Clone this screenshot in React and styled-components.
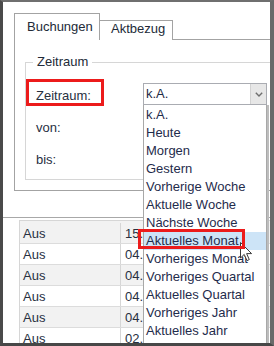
import React from "react";
import styled, { createGlobalStyle } from "styled-components";

const GlobalStyle = createGlobalStyle`
  html, body {
    margin: 0;
    padding: 0;
    background: #fff;
  }
  body {
    font-family: "Liberation Sans", Arial, sans-serif;
    font-size: 13px;
    color: #1e2a44;
  }
`;

const Frame = styled.div`
  position: relative;
  width: 274px;
  height: 346px;
  box-sizing: border-box;
  border-style: solid;
  border-width: 2px 4px 3px 3px;
  border-color: #6f6f6f #6a6a6a #474747 #4a4a4a;
  background: #fff;
  overflow: hidden;
`;

const TabArea = styled.div`
  padding: 11px 0 0 11px;
`;

const TabStrip = styled.div`
  display: flex;
  align-items: flex-end;
  height: 27px;
`;

const Tab = styled.div`
  position: relative;
  z-index: 1;
  box-sizing: border-box;
  width: ${(p) => (p.$active ? "86px" : "73px")};
  height: ${(p) => (p.$active ? "27px" : "20px")};
  padding-left: ${(p) => (p.$active ? "12px" : "11px")};
  padding-top: ${(p) => (p.$active ? "5px" : "0")};
  line-height: 15px;
  background: #fff;
  color: #222a38;
  border: 1px solid #a3a3a3;
  border-left-width: ${(p) => (p.$active ? "1px" : "0")};
  border-bottom-width: 0;
`;

const TabPanel = styled.div`
  box-sizing: border-box;
  margin-top: -1px;
  width: 300px;
  height: 152px;
  border: 1px solid #a3a3a3;
  padding: 14px 0 0 10px;
`;

const Fieldset = styled.fieldset`
  margin: 0;
  width: 288px;
  box-sizing: border-box;
  border: 1px solid #d6d6d6;
  padding: 13px 0 10px 10px;
`;

const Legend = styled.legend`
  margin-left: -3px;
  padding: 0 4px;
  line-height: 16px;
  color: #222a38;
`;

const FieldGrid = styled.div`
  display: grid;
  grid-template-columns: 107px 124px;
  grid-template-rows: 22px 21px 21px;
  row-gap: 11px;
`;

const LabelCell = styled.div`
  position: relative;
  display: flex;
  align-items: center;
  padding-top: 2px;
  color: #28303f;
`;

const Marker = styled.div`
  position: absolute;
  left: ${(p) => p.$left}px;
  top: ${(p) => p.$top}px;
  width: ${(p) => p.$w}px;
  height: ${(p) => p.$h}px;
  box-sizing: border-box;
  border: 3px solid #ec1b1b;
  z-index: 3;
  pointer-events: none;
`;

const SelectWrap = styled.div`
  position: relative;
`;

const SelectBox = styled.div`
  display: flex;
  box-sizing: border-box;
  width: 124px;
  height: 22px;
  border: 1px solid #aaacb2;
  background: #fff;
`;

const SelectValue = styled.span`
  flex: 1;
  padding-left: 2px;
  line-height: 20px;
`;

const ArrowButton = styled.span`
  width: 15px;
  display: flex;
  align-items: center;
  justify-content: center;
  background: #e7e7e7;
  border-left: 1px solid #d2d2d2;
`;

const DropList = styled.ul`
  position: absolute;
  top: 100%;
  left: 0;
  z-index: 2;
  margin: 0;
  padding: 1px 0 12px;
  list-style: none;
  width: 124px;
  box-sizing: border-box;
  background: #fff;
  border: 1px solid #a8a8a8;
  border-top: none;
  box-shadow: 2px 0 0 #bdbdbd;
`;

const Option = styled.li`
  position: relative;
  height: 18px;
  line-height: 18px;
  padding-left: 2px;
  white-space: nowrap;
  color: #1f2c4c;
  background: ${(p) => (p.$hover ? "#cde4f7" : "transparent")};
`;

const Cursor = styled.svg`
  position: absolute;
  left: 96px;
  top: 10px;
  z-index: 2;
`;

const Splitter = styled.div`
  margin-top: 26px;
  border-top: 1px solid #a8a8a8;
`;

const Grid = styled.div`
  margin: 2px 0 0 16px;
  border-left: 1px solid #d6d6d6;
  border-top: 1px solid #d6d6d6;
`;

const Row = styled.div`
  display: grid;
  grid-template-columns: 101px 1fr;
  box-sizing: border-box;
  height: ${(p) => (p.$first ? "23px" : "21px")};
  padding-top: ${(p) => (p.$first ? "2px" : "0")};
  border-bottom: 1px solid #dcdcdc;
  background: ${(p) => (p.$alt ? "#f2f2f2" : "#fff")};
`;

const Cell = styled.div`
  display: flex;
  align-items: center;
  padding-left: ${(p) => (p.$first ? "3px" : "4px")};
  border-right: ${(p) => (p.$first ? "1px solid #d6d6d6" : "none")};
  color: #28303f;
  white-space: nowrap;
`;

const options = [
  "k.A.",
  "Heute",
  "Morgen",
  "Gestern",
  "Vorherige Woche",
  "Aktuelle Woche",
  "Nächste Woche",
  "Aktuelles Monat",
  "Vorheriges Monat",
  "Vorheriges Quartal",
  "Aktuelles Quartal",
  "Vorheriges Jahr",
  "Aktuelles Jahr",
];

const rows = [
  ["Aus", "15.01."],
  ["Aus", "04.01."],
  ["Aus", "04.01."],
  ["Aus", "04.01."],
  ["Aus", "04.01."],
  ["Aus", "02.01."],
];

const Chevron = () => (
  <svg width="8" height="5" viewBox="0 0 8 5">
    <path d="M0.8 0.8 L4 4 L7.2 0.8" fill="none" stroke="#6e6e6e" strokeWidth="1.4" />
  </svg>
);

const App = () => (
  <>
    <GlobalStyle />
    <Frame>
      <TabArea>
        <TabStrip>
          <Tab $active>Buchungen</Tab>
          <Tab>Aktbezug</Tab>
        </TabStrip>
        <TabPanel>
          <Fieldset>
            <Legend>Zeitraum</Legend>
            <FieldGrid>
              <LabelCell>
                <Marker $left={-10} $top={-4} $w={78} $h={27} />
                Zeitraum:
              </LabelCell>
              <SelectWrap>
                <SelectBox>
                  <SelectValue>k.A.</SelectValue>
                  <ArrowButton>
                    <Chevron />
                  </ArrowButton>
                </SelectBox>
                <DropList>
                  {options.map((o) => (
                    <Option key={o} $hover={o === "Aktuelles Monat"}>
                      {o}
                      {o === "Aktuelles Monat" && (
                        <>
                          <Cursor width="13" height="20" viewBox="0 0 13 20">
                            <path
                              d="M0.5 0.5 L0.5 16 L4.2 12.4 L7 18.6 L9.3 17.6 L6.6 11.6 L11.6 11.6 Z"
                              fill="#fff"
                              stroke="#3a3a3a"
                              strokeWidth="1"
                              strokeLinejoin="round"
                            />
                          </Cursor>
                          <Marker $left={-6} $top={-3} $w={107} $h={20} />
                        </>
                      )}
                    </Option>
                  ))}
                </DropList>
              </SelectWrap>
              <LabelCell>von:</LabelCell>
              <div />
              <LabelCell>bis:</LabelCell>
              <div />
            </FieldGrid>
          </Fieldset>
        </TabPanel>
      </TabArea>
      <Splitter />
      <Grid>
        {rows.map(([a, b], i) => (
          <Row key={i} $first={i === 0} $alt={i % 2 === 0}>
            <Cell $first>{a}</Cell>
            <Cell>{b}</Cell>
          </Row>
        ))}
      </Grid>
    </Frame>
  </>
);

export default App;
